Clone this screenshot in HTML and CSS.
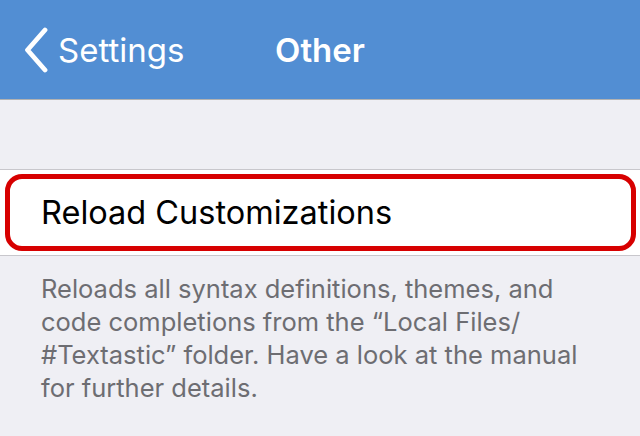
FILE: index.html
```html
<!DOCTYPE html>
<html lang="en">
<head>
    <meta charset="UTF-8">
    <meta name="viewport" content="width=device-width, initial-scale=1.0">
    <title>Other</title>
    <link rel="stylesheet" href="styles.css">
</head>
<body>
    <div class="navbar">
        <div class="back">
            <svg class="chevron" width="24" height="46" viewBox="0 0 24 46">
                <path d="M21 3 L3.5 23 L21 43" fill="none" stroke="white" stroke-width="4.8" stroke-linecap="round" stroke-linejoin="round"/>
            </svg>
            <span>Settings</span>
        </div>
        <div class="title">Other</div>
    </div>

    <div class="spacer"></div>

    <div class="group">
        <div class="cell">
            <div class="highlight">Reload Customizations</div>
        </div>
    </div>

    <p class="footer">Reloads all syntax definitions, themes, and code completions from the “Local Files/<wbr>#Textastic” folder. Have a look at the manual for further details.</p>
</body>
</html>
```

FILE: styles.css
```css
body {
    font-family: Inter, Roboto, 'Liberation Sans', sans-serif;
    margin: 0;
    background-color: #efeff4;
    color: black;
}

.navbar {
    height: 100px;
    background-color: #528ed3;
    border-bottom: 1px solid #b2b2b2;
    box-sizing: border-box;
    display: flex;
    align-items: center;
    color: white;
    position: relative;
}

.back {
    display: flex;
    align-items: center;
    gap: 10px;
    padding-left: 24px;
    font-size: 33px;
}

.chevron {
    display: block;
}

.title {
    position: absolute;
    left: 0;
    right: 0;
    text-align: center;
    font-size: 33px;
    font-weight: 600;
    pointer-events: none;
}

.spacer {
    height: 69px;
}

.group {
    background-color: white;
    border-top: 1px solid #c8c7cc;
    border-bottom: 1px solid #c8c7cc;
    padding: 4px 4px 4px 5px;
}

.highlight {
    border: 5px solid #d70000;
    border-radius: 17px;
    height: 67px;
    display: flex;
    align-items: center;
    padding-left: 31px;
    font-size: 32.5px;
}

.footer {
    margin: 16px 40px 0 41px;
    font-size: 25.5px;
    line-height: 33px;
    color: #6d6d72;
}
```
